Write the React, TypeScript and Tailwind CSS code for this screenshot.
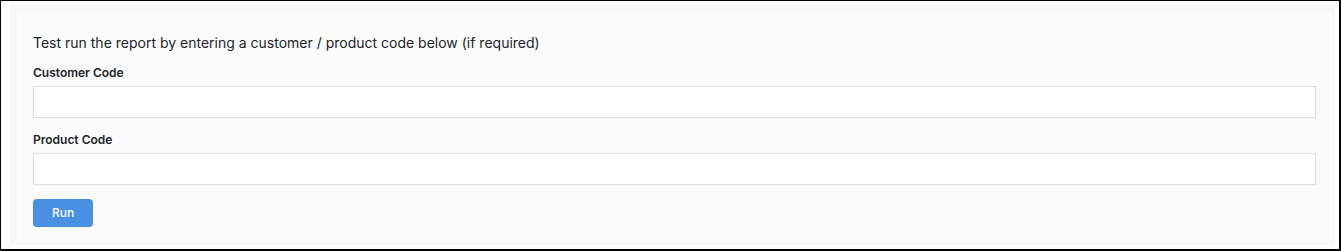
export default function App() {
  return (
    <div className="h-[251px] w-[1341px] border border-black border-r-2 border-b-2 bg-white pl-[9px] pt-[4px] pr-[4px] pb-[4px] font-['Inter',sans-serif] text-[#212529]">
      <div className="h-full bg-[#f7f8fa] pl-[7px] pt-[7px] pr-[3px]">
        <div className="h-[230px] bg-[#fbfbfc] pl-4 pr-4 pt-[21px]">
          <p className="text-[14px] leading-5">
            Test run the report by entering a customer / product code below (if required)
          </p>
          <div className="mt-[12px]">
            <label className="block text-[12px] font-semibold leading-4">Customer Code</label>
            <input
              type="text"
              className="mt-[5px] block h-[32px] w-full border border-[#dcdcdc] bg-white outline-none"
            />
          </div>
          <div className="mt-[14px]">
            <label className="block text-[12px] font-semibold leading-4">Product Code</label>
            <input
              type="text"
              className="mt-[5px] block h-[32px] w-full border border-[#dcdcdc] bg-white outline-none"
            />
          </div>
          <button className="mt-[14px] h-[28px] w-[60px] rounded-[4px] bg-[#4a90e2] text-[12px] font-medium text-white">
            Run
          </button>
        </div>
      </div>
    </div>
  );
}
